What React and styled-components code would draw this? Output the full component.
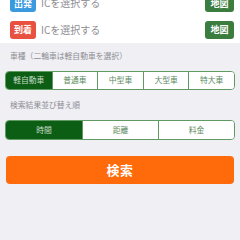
import React, { useState } from 'react';
import styled, { createGlobalStyle } from 'styled-components';

const GlobalStyle = createGlobalStyle`
  html, body {
    margin: 0;
    padding: 0;
    background: #efeff4;
    font-family: "Noto Sans CJK JP", "Noto Sans", sans-serif;
  }
`;

const Page = styled.div`
  width: 240px;
  height: 240px;
  overflow: hidden;
  background: #efeff4;
`;

const IcPanel = styled.div`
  background: #fff;
  margin-top: -10px;
  display: flex;
  flex-direction: column;
`;

const IcRow = styled.div`
  height: 26.5px;
  display: flex;
  align-items: center;
  padding: 0 6px 0 10px;
  gap: 5px;
`;

const Badge = styled.span`
  width: 26px;
  height: 18px;
  border-radius: 3px;
  background: ${p => p.$color};
  color: #fff;
  font-size: 9px;
  font-weight: 700;
  display: flex;
  align-items: center;
  justify-content: center;
  line-height: 1;
`;

const IcText = styled.span`
  flex: 1;
  font-size: 10px;
  color: #8e8e93;
  line-height: 1;
`;

const MapButton = styled.button`
  width: 29px;
  height: 18px;
  border: none;
  border-radius: 3px;
  background: #3a7d3f;
  color: #fff;
  font-family: inherit;
  font-size: 9px;
  font-weight: 700;
  padding: 0;
  line-height: 1;
`;

const Section = styled.div`
  padding: 0 5px;
  display: flex;
  flex-direction: column;
`;

const Label = styled.div`
  font-size: 7.8px;
  color: #8e8e93;
  line-height: 1;
  padding: 0 5px;
  margin-top: ${p => p.$top}px;
  margin-bottom: ${p => p.$bottom}px;
`;

const Segmented = styled.div`
  display: grid;
  grid-template-columns: repeat(${p => p.$count}, 1fr);
  height: ${p => p.$height}px;
  border: 1px solid #5f9a63;
  border-radius: 4px;
  overflow: hidden;
  background: #fff;
`;

const Segment = styled.div`
  display: flex;
  align-items: center;
  justify-content: center;
  font-size: 7.8px;
  line-height: 1;
  color: ${p => (p.$active ? '#c9dcc9' : '#5a8a5e')};
  background: ${p => (p.$active ? '#0c5e14' : '#fff')};
  & + & {
    border-left: 1px solid #5f9a63;
  }
`;

const SearchButton = styled.button`
  margin: 16px 1px 0;
  height: 28px;
  border: none;
  border-radius: 4px;
  background: #ff6a0a;
  color: #fff;
  font-family: inherit;
  font-size: 13px;
  font-weight: 700;
  letter-spacing: 0.5px;
  padding: 0;
`;

const vehicles = ['軽自動車', '普通車', '中型車', '大型車', '特大車'];
const orders = ['時間', '距離', '料金'];

const App = () => {
  const [vehicle, setVehicle] = useState(0);
  const [order, setOrder] = useState(0);
  return (
    <Page>
      <GlobalStyle />
      <IcPanel>
        <IcRow>
          <Badge $color="#3a9ae0">出発</Badge>
          <IcText>ICを選択する</IcText>
          <MapButton>地図</MapButton>
        </IcRow>
        <IcRow>
          <Badge $color="#e8503f">到着</Badge>
          <IcText>ICを選択する</IcText>
          <MapButton>地図</MapButton>
        </IcRow>
      </IcPanel>
      <Section>
        <Label $top={9} $bottom={11}>車種（二輪車は軽自動車を選択）</Label>
        <Segmented $count={5} $height={17}>
          {vehicles.map((v, i) => (
            <Segment key={v} $active={i === vehicle} onClick={() => setVehicle(i)}>{v}</Segment>
          ))}
        </Segmented>
        <Label $top={11} $bottom={11}>検索結果並び替え順</Label>
        <Segmented $count={3} $height={18}>
          {orders.map((o, i) => (
            <Segment key={o} $active={i === order} onClick={() => setOrder(i)}>{o}</Segment>
          ))}
        </Segmented>
        <SearchButton>検索</SearchButton>
      </Section>
    </Page>
  );
};

export default App;
